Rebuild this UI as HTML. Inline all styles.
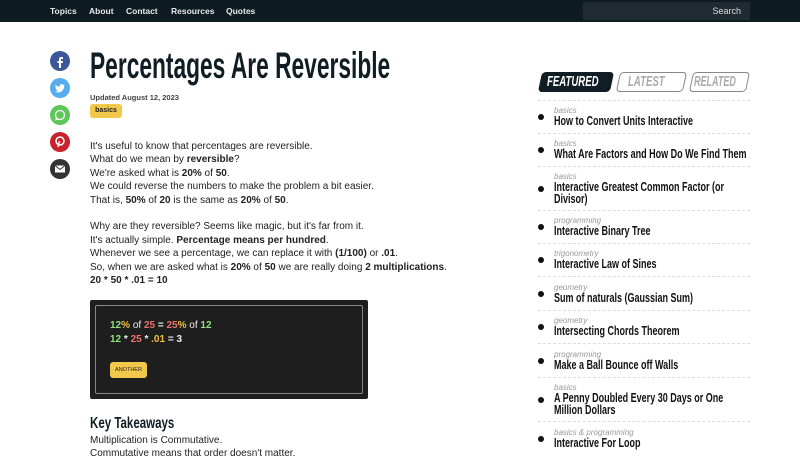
<!DOCTYPE html>
<html><head><meta charset="utf-8"><style>
*{margin:0;padding:0;box-sizing:border-box}
body{width:800px;height:450px;overflow:hidden;background:#fff;font-family:"Liberation Sans",sans-serif;color:#111;position:relative}
.nav{position:absolute;left:0;top:0;width:800px;height:22px;background:#0f1b22}
.nav a{position:absolute;top:6px;color:#e8e8e8;font-size:8.5px;font-weight:bold;text-decoration:none}
.search{position:absolute;left:583px;top:2px;width:167px;height:18px;background:#1f2b31;border-radius:2px;color:#ddd;font-size:9px;text-align:right;padding:4px 9px 0 0}
.cond{display:inline-block;transform-origin:left top;white-space:nowrap;font-weight:bold}
.soc{position:absolute;left:50px;width:20px;height:20px;border-radius:50%}
.body{position:absolute;left:90px;font-size:10px;line-height:13.4px;color:#222}
.box{position:absolute;left:90px;top:300px;width:278px;height:99px;background:#1e1e1e;border-radius:2px}
.box .in{position:absolute;left:5px;top:5px;right:5px;bottom:5px;border:1px solid #888;border-radius:2px}
.g{color:#8fe07a}.r{color:#f07070}.y{color:#f0c040}
.item{position:absolute;left:538px;width:212px}
.sep{position:absolute;left:538px;width:212px;border-top:1px dashed #ddd}
.cat{position:absolute;left:16px;font-size:8px;font-style:italic;color:#999;font-family:"Liberation Sans Narrow","Liberation Sans",sans-serif}
.dot{position:absolute;left:0;width:6px;height:6px;border-radius:50%;background:#111}
.tt{position:absolute;left:16px;font-size:12.5px;line-height:12px;color:#111}
.tab{position:absolute;top:72px;height:20px;transform:skewX(-12deg);border-radius:4px}
</style></head><body>
<div class="nav">
<a style="left:50px">Topics</a><a style="left:89px">About</a><a style="left:126px">Contact</a><a style="left:171px">Resources</a><a style="left:226px">Quotes</a>
<div class="search">Search</div>
</div>

<div class="soc" style="top:51px;background:#3b5998"><svg width="20" height="20"><path d="M11 6h2V8h-1.5c-.4 0-.5.2-.5.6V10h2l-.3 2H11v5H9v-5H7.5v-2H9V8.2C9 6.8 9.8 6 11 6z" fill="#fff"/></svg></div>
<div class="soc" style="top:78px;background:#55acee"><svg width="20" height="20"><path d="M15 7.3a4 4 0 0 1-1.2.3 2 2 0 0 0 .9-1.1 4 4 0 0 1-1.3.5 2 2 0 0 0-3.5 1.9A5.8 5.8 0 0 1 5.7 6.8a2 2 0 0 0 .6 2.7 2 2 0 0 1-.9-.2 2 2 0 0 0 1.6 2 2 2 0 0 1-.9 0 2 2 0 0 0 1.9 1.4A4 4 0 0 1 5 13.5 5.8 5.8 0 0 0 14 8.4v-.3c.4-.3.7-.6 1-.8z" fill="#fff"/></svg></div>
<div class="soc" style="top:105px;background:#5cc85a"><svg width="20" height="20"><circle cx="10" cy="10" r="4.5" fill="none" stroke="#fff" stroke-width="1.3"/><path d="M6 13l-1 2.5 2.6-.9z" fill="#fff"/></svg></div>
<div class="soc" style="top:132px;background:#c8232c"><svg width="20" height="20"><circle cx="10" cy="9" r="4" fill="none" stroke="#fff" stroke-width="1.5"/><path d="M9.5 9l-1.5 6" stroke="#fff" stroke-width="1.4"/></svg></div>
<div class="soc" style="top:159px;background:#333"><svg width="20" height="20"><rect x="5" y="6.5" width="10" height="7" fill="#fff"/><path d="M5 6.5l5 4 5-4" fill="none" stroke="#333" stroke-width="1"/></svg></div>

<div style="position:absolute;left:90px;top:45px;font-size:37px;line-height:42px;color:#111d24"><span class="cond" style="transform:scaleX(.615)">Percentages Are Reversible</span></div>
<div style="position:absolute;left:90px;top:93px;font-size:7.5px;font-weight:bold;color:#444">Updated August 12, 2023</div>
<div style="position:absolute;left:90px;top:104px;width:32px;height:14px;background:#f2c84b;border-radius:3px;font-size:7px;font-weight:bold;text-align:center;line-height:14px;color:#222">basics</div>

<div class="body" style="top:140px">It's useful to know that percentages are reversible.<br>What do we mean by <b>reversible</b>?<br>We're asked what is <b>20%</b> of <b>50</b>.<br>We could reverse the numbers to make the problem a bit easier.<br>That is, <b>50%</b> of <b>20</b> is the same as <b>20%</b> of <b>50</b>.<br><br>Why are they reversible? Seems like magic, but it's far from it.<br>It's actually simple. <b>Percentage means per hundred</b>.<br>Whenever we see a percentage, we can replace it with <b>(1/100)</b> or <b>.01</b>.<br>So, when we are asked what is <b>20%</b> of <b>50</b> we are really doing <b>2 multiplications</b>.<br><b>20 * 50 * .01 = 10</b></div>

<div class="box"><div class="in"></div>
<div style="position:absolute;left:20px;top:19px;font-size:10px;line-height:14px;color:#eee;font-weight:bold"><span class="g">12</span><span class="y">%</span> <span style="font-weight:normal">of</span> <span class="r">25</span> = <span class="r">25</span><span class="y">%</span> <span style="font-weight:normal">of</span> <span class="g">12</span><br><span class="g">12</span> * <span class="r">25</span> * <span class="y">.01</span> = 3</div>
<div style="position:absolute;left:20px;top:62px;width:37px;height:16px;background:#f2c84b;border-radius:3px;font-size:5.5px;text-align:center;line-height:16px;color:#222">ANOTHER</div>
</div>

<div style="position:absolute;left:90px;top:415px;font-size:16px;color:#111d24"><span class="cond" style="transform:scaleX(.72)">Key Takeaways</span></div>
<div class="body" style="top:434px">Multiplication is Commutative.<br>Commutative means that order doesn't matter.</div>

<div class="tab" style="left:540px;width:72px;background:#111d24"></div>
<div class="tab" style="left:618px;width:67px;border:1px solid #888"></div>
<div class="tab" style="left:691px;width:57px;border:1px solid #888"></div>
<div style="position:absolute;left:547px;top:73px;font-size:15px;font-style:italic;color:#fff"><span class="cond" style="transform:scaleX(.64)">FEATURED</span></div>
<div style="position:absolute;left:628px;top:73px;font-size:15px;font-style:italic;color:#aaa"><span class="cond" style="transform:scaleX(.64)">LATEST</span></div>
<div style="position:absolute;left:694px;top:73px;font-size:15px;font-style:italic;color:#aaa"><span class="cond" style="transform:scaleX(.6)">RELATED</span></div>

<div class="sep" style="top:100px"></div>
<div class="item" style="top:106px"><div class="cat" style="top:0">basics</div><div class="dot" style="top:8px"></div><div class="tt" style="top:9px"><span class="cond" style="transform:scaleX(.72)">How to Convert Units Interactive</span></div></div>
<div class="sep" style="top:133px"></div>
<div class="item" style="top:139px"><div class="cat" style="top:0">basics</div><div class="dot" style="top:8px"></div><div class="tt" style="top:9px"><span class="cond" style="transform:scaleX(.72)">What Are Factors and How Do We Find Them</span></div></div>
<div class="sep" style="top:166px"></div>
<div class="item" style="top:172px"><div class="cat" style="top:0">basics</div><div class="dot" style="top:14px"></div><div class="tt" style="top:9px"><span class="cond" style="transform:scaleX(.72)">Interactive Greatest Common Factor (or</span><br><span class="cond" style="transform:scaleX(.72)">Divisor)</span></div></div>
<div class="sep" style="top:210px"></div>
<div class="item" style="top:216px"><div class="cat" style="top:0">programming</div><div class="dot" style="top:8px"></div><div class="tt" style="top:9px"><span class="cond" style="transform:scaleX(.72)">Interactive Binary Tree</span></div></div>
<div class="sep" style="top:243px"></div>
<div class="item" style="top:249px"><div class="cat" style="top:0">trigonometry</div><div class="dot" style="top:8px"></div><div class="tt" style="top:9px"><span class="cond" style="transform:scaleX(.72)">Interactive Law of Sines</span></div></div>
<div class="sep" style="top:276px"></div>
<div class="item" style="top:283px"><div class="cat" style="top:0">geometry</div><div class="dot" style="top:8px"></div><div class="tt" style="top:9px"><span class="cond" style="transform:scaleX(.72)">Sum of naturals (Gaussian Sum)</span></div></div>
<div class="sep" style="top:310px"></div>
<div class="item" style="top:316px"><div class="cat" style="top:0">geometry</div><div class="dot" style="top:8px"></div><div class="tt" style="top:9px"><span class="cond" style="transform:scaleX(.72)">Intersecting Chords Theorem</span></div></div>
<div class="sep" style="top:343px"></div>
<div class="item" style="top:350px"><div class="cat" style="top:0">programming</div><div class="dot" style="top:8px"></div><div class="tt" style="top:9px"><span class="cond" style="transform:scaleX(.72)">Make a Ball Bounce off Walls</span></div></div>
<div class="sep" style="top:377px"></div>
<div class="item" style="top:383px"><div class="cat" style="top:0">basics</div><div class="dot" style="top:14px"></div><div class="tt" style="top:9px"><span class="cond" style="transform:scaleX(.72)">A Penny Doubled Every 30 Days or One</span><br><span class="cond" style="transform:scaleX(.72)">Million Dollars</span></div></div>
<div class="sep" style="top:421px"></div>
<div class="item" style="top:428px"><div class="cat" style="top:0">basics &amp; programming</div><div class="dot" style="top:8px"></div><div class="tt" style="top:9px"><span class="cond" style="transform:scaleX(.72)">Interactive For Loop</span></div></div>
</body></html>
